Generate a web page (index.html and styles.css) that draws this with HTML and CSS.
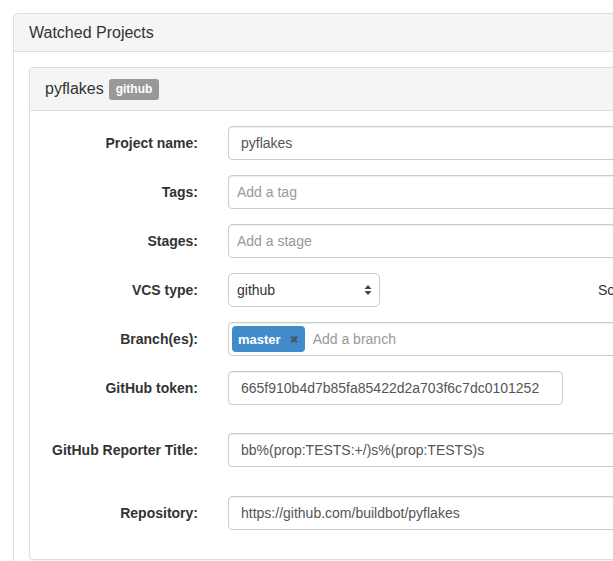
FILE: index.html
```html
<!DOCTYPE html>
<html>
<head>
<meta charset="utf-8">
<link rel="stylesheet" href="styles.css">
</head>
<body>
<div class="page">
  <div class="panel outer">
    <div class="panel-heading"><h3 class="panel-title">Watched Projects</h3></div>
    <div class="panel-body">
      <div class="panel inner">
        <div class="panel-heading inner-heading">
          <h4 class="project-title">pyflakes <span class="badge">github</span></h4>
        </div>
        <div class="panel-body form">
          <div class="row">
            <label class="lbl">Project name:</label>
            <div class="input wide">pyflakes</div>
          </div>
          <div class="row">
            <label class="lbl">Tags:</label>
            <div class="input wide tags"><span class="ph">Add a tag</span></div>
          </div>
          <div class="row">
            <label class="lbl">Stages:</label>
            <div class="input wide tags"><span class="ph">Add a stage</span></div>
          </div>
          <div class="row">
            <label class="lbl">VCS type:</label>
            <div class="select">
              <span>github</span>
              <svg class="arrows" width="8" height="12" viewBox="0 0 8 12"><path d="M4 1 L7.5 5 L0.5 5 Z M4 11 L7.5 7 L0.5 7 Z" fill="#444"/></svg>
            </div>
            <span class="side">So</span>
          </div>
          <div class="row">
            <label class="lbl">Branch(es):</label>
            <div class="input wide tags branch">
              <span class="tag">master<span class="x">&#x2716;</span></span>
              <span class="ph">Add a branch</span>
            </div>
          </div>
          <div class="row row-token">
            <label class="lbl">GitHub token:</label>
            <div class="input token">665f910b4d7b85fa85422d2a703f6c7dc0101252</div>
          </div>
          <div class="row row-reporter">
            <label class="lbl">GitHub Reporter Title:</label>
            <div class="input wide">bb%(prop:TESTS:+/)s%(prop:TESTS)s</div>
          </div>
          <div class="row last">
            <label class="lbl">Repository:</label>
            <div class="input wide">https://github.com/buildbot/pyflakes</div>
          </div>
        </div>
      </div>
    </div>
  </div>
</div>
</body>
</html>
```
FILE: styles.css
```css
html, body {
  margin: 0;
  padding: 0;
  overflow: hidden;
  background: #fff;
}
body {
  font-family: "Liberation Sans", Arial, sans-serif;
  font-size: 14px;
  color: #333;
}
.page {
  padding: 13px 0 0 13px;
  width: 1100px;
}
.panel {
  border: 1px solid #ddd;
  border-radius: 4px;
  background: #fff;
  box-shadow: 0 1px 1px rgba(0,0,0,0.05);
}
.outer {
  width: 900px;
  height: 700px;
}
.panel-heading {
  background: #f5f5f5;
  border-bottom: 1px solid #ddd;
  border-radius: 3px 3px 0 0;
  padding: 10px 15px;
}
.panel-title {
  margin: 0;
  font-size: 16px;
  font-weight: normal;
  line-height: 17px;
  color: #333;
}
.panel-body {
  padding: 15px;
}
.inner-heading {
  padding: 10px 15px;
}
.project-title {
  margin: 0;
  font-size: 16px;
  font-weight: normal;
  line-height: 22px;
  height: 22px;
  display: flex;
  align-items: center;
  gap: 5px;
}
.badge {
  display: inline-block;
  background: #999;
  color: #fff;
  font-size: 12px;
  font-weight: bold;
  line-height: 14px;
  padding: 3px 7px 4px;
  border-radius: 3px;
}
.form {
  padding: 15px 15px 14px 15px;
}
.row {
  display: flex;
  align-items: center;
  height: 34px;
  margin-bottom: 15px;
}
.row-token { margin-bottom: 28px; }
.row-reporter { margin-bottom: 29px; }
.row.last { margin-bottom: 15px; }
.lbl {
  width: 153px;
  margin-right: 30px;
  text-align: right;
  font-weight: bold;
  color: #333;
  font-size: 14px;
  flex: none;
}
.input {
  box-sizing: border-box;
  height: 34px;
  border: 1px solid #ccc;
  border-radius: 4px;
  padding: 0 12px;
  display: flex;
  align-items: center;
  color: #555;
  font-size: 14px;
  box-shadow: inset 0 1px 1px rgba(0,0,0,0.075);
  white-space: nowrap;
}
.wide { width: 640px; flex: none; }
.token { width: 335px; flex: none; }
.tags { padding: 0 8px; }
.ph { color: #999; }
.branch { padding: 0 3px; }
.tag {
  display: inline-flex;
  align-items: center;
  height: 26px;
  background: #428bca;
  color: #fff;
  font-weight: bold;
  font-size: 13px;
  border-radius: 4px;
  padding: 0 7px 0 6px;
  margin-right: 8px;
}
.x {
  color: #4a4a4a;
  opacity: 0.75;
  font-size: 10px;
  margin-left: 9px;
}
.select {
  box-sizing: border-box;
  width: 152px;
  height: 34px;
  border: 1px solid #ccc;
  border-radius: 5px;
  padding: 0 7px 0 8px;
  display: flex;
  align-items: center;
  justify-content: space-between;
  color: #333;
  font-size: 14px;
  flex: none;
}
.arrows { display: block; }
.side {
  margin-left: 218px;
  color: #333;
  white-space: nowrap;
}
```
